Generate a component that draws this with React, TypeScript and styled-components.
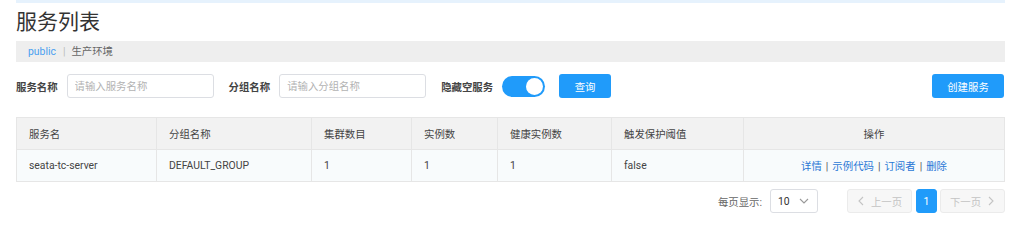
import React from "react";
import styled, { createGlobalStyle } from "styled-components";

const GlobalStyle = createGlobalStyle`
  html, body { margin: 0; padding: 0; background: #fff; }
  body {
    font-family: Roboto, "Noto Sans CJK SC", "Noto Sans", sans-serif;
    font-size: 10.4px;
    color: #333;
  }
  * { box-sizing: border-box; }
`;

const Page = styled.div`
  padding: 0 19px 0 16px;
  width: 1024px;
`;

const TopStrip = styled.div`
  height: 3px;
  background: #e6f2fd;
`;

const Title = styled.h1`
  margin: 7px 0 0;
  font-size: 21px;
  line-height: 24px;
  font-weight: 400;
  color: #333;
`;

const Breadcrumb = styled.div`
  margin-top: 7px;
  height: 21px;
  line-height: 21px;
  padding-left: 12px;
  background: #eeeeee;
  display: flex;
  align-items: center;
`;

const CrumbLink = styled.span`
  color: #4a9ff0;
`;

const CrumbSep = styled.span`
  color: #bbb;
  margin: 0 6px 0 7px;
`;

const CrumbText = styled.span`
  color: #666;
`;

const SearchRow = styled.div`
  margin-top: 12px;
  height: 24px;
  display: flex;
  align-items: center;
`;

const FieldLabel = styled.span<{ $first?: boolean }>`
  font-weight: 700;
  color: #444;
  margin-left: ${(p) => (p.$first ? "0" : "15px")};
  margin-right: 9px;
  white-space: nowrap;
`;

const TextInput = styled.input`
  width: 147px;
  height: 24px;
  border: 1px solid #dcdee3;
  border-radius: 3px;
  padding: 0 7px;
  font-family: inherit;
  font-size: 10.4px;
  color: #333;
  outline: none;
  &::placeholder { color: #b3b3b3; }
`;

const Switch = styled.div`
  width: 43px;
  height: 21px;
  border-radius: 11px;
  background: #209bfa;
  display: flex;
  align-items: center;
  justify-content: flex-end;
  padding-right: 2px;
`;

const Knob = styled.div`
  width: 17px;
  height: 17px;
  border-radius: 50%;
  background: #fff;
`;

const PrimaryButton = styled.button<{ $w: number; $push?: boolean }>`
  width: ${(p) => p.$w}px;
  height: 24px;
  margin-left: ${(p) => (p.$push ? "auto" : "14px")};
  margin-right: ${(p) => (p.$push ? "1px" : "0")};
  border: none;
  border-radius: 3px;
  background: #209bfa;
  color: #fff;
  font-family: inherit;
  font-size: 10.4px;
  padding: 0;
`;

const Table = styled.table`
  margin-top: 19px;
  width: 989px;
  border-collapse: collapse;
  table-layout: fixed;
`;

const Th = styled.th<{ $w?: number; $center?: boolean }>`
  width: ${(p) => (p.$w ? `${p.$w}px` : "auto")};
  height: 32px;
  padding: 0 12px;
  background: #f2f2f2;
  border: 1px solid #e6e6e6;
  font-weight: 400;
  color: #444;
  text-align: ${(p) => (p.$center ? "center" : "left")};
`;

const Td = styled.td<{ $center?: boolean }>`
  height: 32px;
  padding: 0 12px;
  background: #f8fbfc;
  border: 1px solid #e6e6e6;
  color: #444;
  text-align: ${(p) => (p.$center ? "center" : "left")};
  white-space: nowrap;
`;

const ActionLink = styled.a`
  color: #2a78d6;
  text-decoration: none;
`;

const ActionSep = styled.span`
  color: #555;
  margin: 0 4px;
`;

const Pager = styled.div`
  margin-top: 7px;
  display: flex;
  justify-content: flex-end;
  align-items: center;
  height: 24px;
`;

const PagerLabel = styled.span`
  color: #666;
`;

const Select = styled.div`
  margin-left: 8px;
  width: 48px;
  height: 24px;
  border: 1px solid #dcdee3;
  border-radius: 3px;
  display: flex;
  align-items: center;
  justify-content: space-between;
  padding: 0 8px 0 7px;
  color: #333;
`;

const PageButton = styled.div<{ $w: number; $active?: boolean; $gap: number }>`
  width: ${(p) => p.$w}px;
  height: 24px;
  margin-left: ${(p) => p.$gap}px;
  border-radius: 3px;
  display: flex;
  align-items: center;
  justify-content: center;
  gap: 6px;
  border: 1px solid ${(p) => (p.$active ? "#209bfa" : "#ebebeb")};
  background: ${(p) => (p.$active ? "#209bfa" : "#f7f7f7")};
  color: ${(p) => (p.$active ? "#fff" : "#c4c4c4")};
`;

const Chevron = ({ dir, color }: { dir: "left" | "right" | "down"; color: string }) => {
  const pts =
    dir === "left" ? "6,1 2,5 6,9" : dir === "right" ? "2,1 6,5 2,9" : "1,3 5,7 9,3";
  const w = dir === "down" ? 10 : 8;
  return (
    <svg width={w} height={10} viewBox={`0 0 ${w} 10`}>
      <polyline points={pts} fill="none" stroke={color} strokeWidth="1.1" />
    </svg>
  );
};

const columns: { label: string; w?: number; center?: boolean }[] = [
  { label: "服务名", w: 140 },
  { label: "分组名称", w: 155 },
  { label: "集群数目", w: 100 },
  { label: "实例数", w: 86 },
  { label: "健康实例数", w: 114 },
  { label: "触发保护阈值", w: 132 },
  { label: "操作", center: true },
];

const actions = ["详情", "示例代码", "订阅者", "删除"];

export default function App() {
  return (
    <>
      <GlobalStyle />
      <Page>
        <TopStrip />
        <Title>服务列表</Title>
        <Breadcrumb>
          <CrumbLink>public</CrumbLink>
          <CrumbSep>|</CrumbSep>
          <CrumbText>生产环境</CrumbText>
        </Breadcrumb>
        <SearchRow>
          <FieldLabel $first>服务名称</FieldLabel>
          <TextInput placeholder="请输入服务名称" />
          <FieldLabel>分组名称</FieldLabel>
          <TextInput placeholder="请输入分组名称" />
          <FieldLabel>隐藏空服务</FieldLabel>
          <Switch>
            <Knob />
          </Switch>
          <PrimaryButton $w={52}>查询</PrimaryButton>
          <PrimaryButton $w={72} $push>
            创建服务
          </PrimaryButton>
        </SearchRow>
        <Table>
          <thead>
            <tr>
              {columns.map((c) => (
                <Th key={c.label} $w={c.w} $center={c.center}>
                  {c.label}
                </Th>
              ))}
            </tr>
          </thead>
          <tbody>
            <tr>
              <Td>seata-tc-server</Td>
              <Td>DEFAULT_GROUP</Td>
              <Td>1</Td>
              <Td>1</Td>
              <Td>1</Td>
              <Td>false</Td>
              <Td $center>
                {actions.map((a, i) => (
                  <React.Fragment key={a}>
                    {i > 0 && <ActionSep>|</ActionSep>}
                    <ActionLink>{a}</ActionLink>
                  </React.Fragment>
                ))}
              </Td>
            </tr>
          </tbody>
        </Table>
        <Pager>
          <PagerLabel>每页显示:</PagerLabel>
          <Select>
            <span>10</span>
            <Chevron dir="down" color="#999" />
          </Select>
          <PageButton $w={65} $gap={29}>
            <Chevron dir="left" color="#c4c4c4" />
            <span>上一页</span>
          </PageButton>
          <PageButton $w={21} $gap={4} $active>
            1
          </PageButton>
          <PageButton $w={65} $gap={3}>
            <span>下一页</span>
            <Chevron dir="right" color="#c4c4c4" />
          </PageButton>
        </Pager>
      </Page>
    </>
  );
}
